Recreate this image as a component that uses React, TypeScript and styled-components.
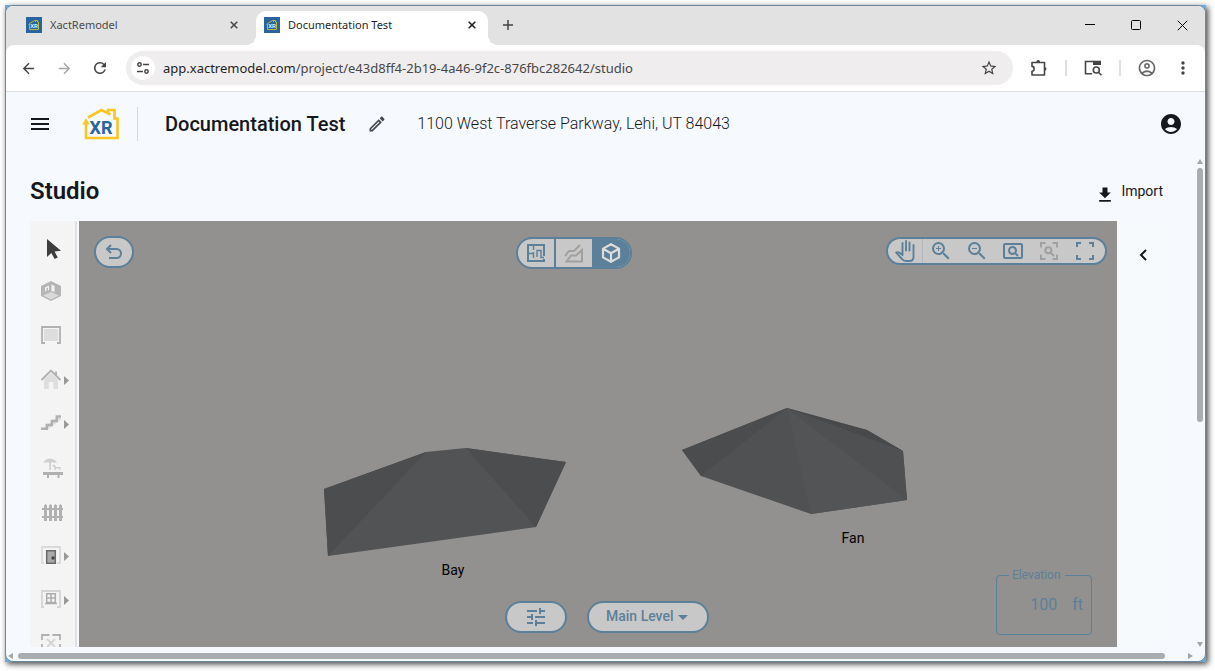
import React from "react";
import styled, { createGlobalStyle } from "styled-components";
import {
  MdAccountCircle,
  MdArrowBack,
  MdArrowForward,
  MdGetApp,
  MdMenu,
  MdMoreVert,
  MdOutlineAccountCircle,
  MdOutlineEdit,
  MdOutlinePageview,
  MdRefresh,
  MdStarBorder,
  MdTune,
  MdZoomIn,
  MdZoomOut,
} from "react-icons/md";

const blue = "#5c8099";
const pillFill = "#c8c8c8";
const uiFont = '"Noto Sans", "Open Sans", sans-serif';
const appFont = 'Roboto, "Liberation Sans", sans-serif';

const GlobalStyle = createGlobalStyle`
  *, *::before, *::after { box-sizing: border-box; }
  body { margin: 0; background: #fff; font-family: ${appFont}; color: #16181d; }
  button { border: 0; padding: 0; background: none; color: inherit; font: inherit; cursor: pointer; }
  svg { display: block; flex: none; }
  h1, h2, p { margin: 0; }
`;

const Page = styled.div`
  height: 100vh;
  min-height: 480px;
  padding: 5px 9px 9px 5px;
  overflow: hidden;
`;

const Frame = styled.div`
  height: 100%;
  background: #6ba9da;
  box-shadow: 2px 2px 6px rgba(0, 0, 0, 0.75);
`;

const BrowserWindow = styled.div`
  height: 100%;
  display: flex;
  flex-direction: column;
  border: 1px solid #6a89a1;
  border-radius: 8px;
  overflow: hidden;
  background: #f6fafe;
`;

const TabStrip = styled.div`
  flex: none;
  height: 39px;
  display: flex;
  background: #e2e2e2;
  font: 11px/16px ${uiFont};
`;

const Tabs = styled.div`
  display: flex;
  padding: 5px 0 0 12px;
`;

const Tab = styled.div<{ $active?: boolean }>`
  position: relative;
  width: ${(p) => (p.$active ? 232 : 238)}px;
  height: 34px;
  display: flex;
  align-items: center;
  gap: 8px;
  padding: 0 ${(p) => (p.$active ? 8 : 14)}px 6px 8px;
  border-radius: 10px 10px 0 0;
  background: ${(p) => (p.$active ? "#fff" : "transparent")};
  color: ${(p) => (p.$active ? "#1f1f1f" : "#4a4a4a")};

  &::before,
  &::after {
    content: ${(p) => (p.$active ? '""' : "none")};
    position: absolute;
    bottom: 0;
    width: 10px;
    height: 10px;
  }
  &::before {
    right: 100%;
    background: radial-gradient(circle at 0 0, transparent 10px, #fff 10px);
  }
  &::after {
    left: 100%;
    background: radial-gradient(circle at 100% 0, transparent 10px, #fff 10px);
  }
`;

const TabTitle = styled.span`
  flex: 1;
  white-space: nowrap;
`;

const StripButton = styled.button`
  width: 16px;
  height: 16px;
  display: grid;
  place-items: center;
`;

const NewTab = styled.button`
  width: 40px;
  height: 38px;
  display: grid;
  place-items: center;
  color: #444;
`;

const WindowControls = styled.div`
  margin-left: auto;
  display: flex;
`;

const WindowButton = styled.button`
  width: 46px;
  height: 38px;
  display: grid;
  place-items: center;
  color: #000;
`;

const ToolbarBack = styled.div`
  flex: none;
  background: #e2e2e2;
`;

const AddressBar = styled.div`
  height: 47px;
  display: flex;
  align-items: center;
  padding: 0 12px;
  border-bottom: 1px solid #dcdfe0;
  border-radius: 8px 8px 0 0;
  background: #fff;
  color: #454545;
`;

const NavButton = styled.button<{ $dim?: boolean }>`
  width: 20px;
  height: 20px;
  margin-right: 16px;
  display: grid;
  place-items: center;
  color: ${(p) => (p.$dim ? "#a6a6a6" : "#444")};
`;

const UrlPill = styled.div`
  flex: 1;
  height: 34px;
  display: flex;
  align-items: center;
  padding: 0 14px 0 5px;
  border-radius: 17px;
  background: #efedee;
`;

const SiteInfo = styled.button`
  width: 24px;
  height: 24px;
  display: grid;
  place-items: center;
  border-radius: 50%;
  background: #fff;
`;

const Url = styled.div`
  flex: 1;
  padding-left: 8px;
  overflow: hidden;
  white-space: nowrap;
  font: 13px/20px ${uiFont};
  color: #474747;

  strong {
    font-weight: 400;
    color: #1f1f1f;
  }
`;

const BrowserActions = styled.div`
  display: flex;
  align-items: center;
  gap: 16px;
  padding-left: 16px;
`;

const BrowserAction = styled.button`
  width: 20px;
  height: 20px;
  display: grid;
  place-items: center;
`;

const ActionRule = styled.span`
  width: 2px;
  height: 16px;
  background: #e0e0e0;
`;

const AppHeader = styled.header`
  flex: none;
  height: 63px;
  display: flex;
  align-items: center;
  padding: 1px 22px 0 22px;
`;

const HeaderButton = styled.button`
  display: grid;
  place-items: center;
`;

const LogoLink = styled.a`
  margin-left: 30px;
  padding-right: 17px;
  border-right: 1px solid #d5d9dd;
`;

const ProjectTitle = styled.h1`
  margin: 0 22px 0 27px;
  font: 500 20px/28px ${appFont};
  white-space: nowrap;
`;

const Address = styled.p`
  flex: 1;
  margin-left: 30px;
  font: 300 16px/24px ${appFont};
  white-space: nowrap;
`;

const Body = styled.div`
  flex: 1;
  min-height: 0;
  display: grid;
  grid-template-columns: minmax(0, 1fr) 10px;
  grid-template-rows: minmax(0, 1fr) 14px;
`;

const Main = styled.main`
  min-height: 0;
  display: flex;
  flex-direction: column;
  padding: 0 28px 0 24px;
`;

const StudioBar = styled.div`
  flex: none;
  height: 66px;
  display: flex;
  align-items: center;
  justify-content: space-between;
  padding: 6px 4px 0 0;
`;

const StudioTitle = styled.h2`
  font: 600 24px/32px ${appFont};
`;

const ImportButton = styled.button`
  display: flex;
  align-items: center;
  gap: 6px;
  font: 14px/20px ${appFont};

  svg {
    margin-top: 8px;
  }
`;

const Workspace = styled.div`
  flex: 1;
  min-height: 0;
  display: flex;
`;

const ToolRail = styled.nav`
  width: 47px;
  margin-right: 2px;
  padding-top: 4px;
  flex: none;
  overflow: hidden;
  border-right: 2px solid #e1e1e1;
  border-radius: 4px 0 0 4px;
  background: #f4f4f4;
`;

const ToolButton = styled.button`
  width: 100%;
  height: 44px;
  display: flex;
  align-items: center;
  gap: 1px;
  padding-left: 9px;
`;

const Canvas = styled.section`
  position: relative;
  flex: 1;
  min-width: 0;
  overflow: hidden;
  background: #92918f;
`;

const Scene = styled.svg`
  width: 100%;
  height: 100%;
`;

const SidePanel = styled.aside`
  width: 50px;
  flex: none;
  padding: 24px 0 0 16px;
  border-right: 1px solid #f8f9fa;
  border-radius: 0 8px 8px 0;
  background: #f7fafd;
`;

const PanelToggle = styled.button`
  width: 20px;
  height: 20px;
  display: grid;
  place-items: center;
`;

const Pill = styled.div`
  display: flex;
  align-items: stretch;
  border: 2px solid ${blue};
  border-radius: 16px;
  overflow: hidden;
  background: ${pillFill};
  color: ${blue};
`;

const UndoPill = styled(Pill)`
  position: absolute;
  top: 15px;
  left: 15px;
  width: 40px;
  height: 32px;
`;

const ViewPill = styled(Pill)`
  position: absolute;
  top: 16px;
  left: calc(50% - 24px);
  width: 116px;
  height: 32px;
  transform: translateX(-50%);
`;

const ZoomPill = styled(Pill)`
  position: absolute;
  top: 16px;
  right: 10px;
  height: 28px;
  padding-right: 2px;
`;

const LevelControls = styled.div`
  position: absolute;
  bottom: 14px;
  left: calc(50% + 9px);
  display: flex;
  gap: 20px;
  transform: translateX(-50%);
`;

const PillButton = styled.button<{ $width?: number; $selected?: boolean; $ruled?: boolean; $dim?: boolean }>`
  flex: ${(p) => (p.$width ? "none" : "1")};
  width: ${(p) => (p.$width ? `${p.$width}px` : "auto")};
  display: flex;
  align-items: center;
  justify-content: center;
  border-right: ${(p) => (p.$ruled ? "1px solid #b4b7b9" : "0")};
  background: ${(p) => (p.$selected ? blue : "transparent")};
  color: ${(p) => (p.$selected ? "#dcdcdc" : p.$dim ? "#a0a0a0" : blue)};
`;

const PillRule = styled.span`
  width: 2px;
  background: ${blue};
`;

const OptionsPill = styled(Pill)`
  width: 62px;
  height: 32px;
`;

const LevelPill = styled(Pill)`
  position: relative;
  width: 122px;
  height: 32px;

  svg {
    position: absolute;
    top: 12px;
    right: 19px;
    pointer-events: none;
  }
`;

const LevelSelect = styled.select`
  flex: 1;
  appearance: none;
  border: 0;
  padding: 0 0 2px 17px;
  background: none;
  color: inherit;
  font: 500 14px/20px ${appFont};
`;

const Elevation = styled.fieldset`
  position: absolute;
  right: 25px;
  bottom: 12px;
  width: 96px;
  min-width: 0;
  height: 67px;
  margin: 0;
  padding: 11px 8px 0 12px;
  border: 1px solid ${blue};
  border-radius: 4px;
  color: ${blue};
  font: 16px/24px ${appFont};

  legend {
    padding: 0 4px 0 3px;
    font-size: 12px;
    line-height: 14px;
  }
`;

const ElevationRow = styled.div`
  display: flex;
  gap: 15px;
`;

const ElevationInput = styled.input`
  flex: 1;
  min-width: 0;
  height: 24px;
  border: 0;
  padding: 0;
  background: none;
  color: inherit;
  font: inherit;
  text-align: right;
`;

const VerticalScroll = styled.div`
  display: flex;
  flex-direction: column;
  align-items: center;
  padding: 4px 0 0;
`;

const HorizontalScroll = styled.div`
  display: flex;
  align-items: center;
  padding: 3px 2px 0;
`;

const Track = styled.div<{ $vertical?: boolean }>`
  flex: 1;
  display: flex;
  flex-direction: ${(p) => (p.$vertical ? "column" : "row")};
  margin: ${(p) => (p.$vertical ? "4px 0" : "0 5px")};
`;

const Thumb = styled.div<{ $vertical?: boolean }>`
  width: ${(p) => (p.$vertical ? "6px" : "calc(100% - 18px)")};
  height: ${(p) => (p.$vertical ? "54%" : "6px")};
  border-radius: 3px;
  background: #a9adb0;
`;

const line = { fill: "none", stroke: "currentColor" };

function Favicon() {
  return (
    <svg width="16" height="16" viewBox="0 0 16 16">
      <path fill="#2a639d" d="M0 0h16v16H0z" />
      <path d="M3.5 7v5.5h9V5h-1V3.5H9.500V5M2.500 7.500l1-1 5-3 1.500.500" fill="none" stroke="#b7b545" />
      <text x="8" y="11" textAnchor="middle" fontSize="6" fontWeight="700" fontFamily={appFont} fill="#dcebf5">XR</text>
    </svg>
  );
}

function Logo() {
  return (
    <svg width="38" height="34" viewBox="0 0 38 34" aria-label="XR">
      <path d="M4 14v17H35.500V11.500H32.500V3H26V6" fill="none" stroke="#f9c622" strokeWidth="2.600" />
      <path d="M6 10.500L19.500 3L28.500 7.500" fill="none" stroke="#f9c622" strokeWidth="2.600" />
      <path d="M4 11L0.300 17.500H7.700z" fill="#f9c622" />
      <text x="19" y="27" textAnchor="middle" fontSize="18" fontWeight="700" fontFamily={appFont} fill="#2a639d">XR</text>
    </svg>
  );
}

function Cross({ size, weight }: { size: number; weight: number }) {
  return (
    <svg width={size} height={size} viewBox={`0 0 ${size} ${size}`} {...line} strokeWidth={weight}>
      <path d={`M.7 .7L${size - 0.7} ${size - 0.7}M${size - 0.7} .7L.7 ${size - 0.7}`} />
    </svg>
  );
}

const toolDrawings: { name: string; menu?: boolean; art: React.ReactNode }[] = [
  {
    name: "Select",
    art: <path d="M8 4V22L12.300 18L15.700 24L18.700 22.400L15.600 16.500L22 15.800z" fill="#3d3d3d" />,
  },
  {
    name: "Room",
    art: (
      <>
        <path d="M12 2L22 7V17L12 22L2 17V7z" fill="#b5b5b5" />
        <path d="M12 13L20 16.500L12 20.500L4 16.500z" fill="#dadada" />
        <path d="M12.500 5.500L15.500 7V13L12.500 12zM6 8.500L10 6.500V11L9 11.500V8.500L7.500 9.300V12L6 12.500z" fill="#f4f4f4" />
      </>
    ),
  },
  {
    name: "Ceiling",
    art: (
      <>
        <path d="M6 20H3V4H21V20H18" fill="none" stroke="#b1b1b1" strokeWidth="1.800" />
        <path d="M5 6H19V18H5z" fill="#dddddd" />
      </>
    ),
  },
  {
    name: "Roof",
    menu: true,
    art: (
      <>
        <path d="M5 12.500L12 6L19 12.500V22H14.500V15H9.800V22H5z" fill="#dedede" />
        <path d="M2.500 13L12 3.500L21.500 13M17 8V4.500" fill="none" stroke="#b1b1b1" strokeWidth="1.900" />
      </>
    ),
  },
  {
    name: "Stairs",
    menu: true,
    art: (
      <>
        <path d="M3 19L7 15L12 11L17 7H22V8.500L8 19z" fill="#dedede" />
        <path d="M2 17.800H7.800V14H12.800V10H17.800V5.500H22" fill="none" stroke="#b1b1b1" strokeWidth="2.400" />
      </>
    ),
  },
  {
    name: "Deck",
    art: (
      <>
        <path d="M4 7.500C6 4.500 9 4 11 3.500C14 4 17 5 18 7.500zM10.300 7H12V15H10.300zM13 10L15.500 9.500L17 12H21.500V15H20.200V13.500H17V15H15.500V13z" fill="#cfcfcf" />
        <path d="M4 17H24V20H20.500V23H18.500V20H10V23H8V20H4z" fill="#b1b1b1" />
      </>
    ),
  },
  {
    name: "Fence",
    art: (
      <path
        d="M5 22V6.500L6.500 5L8 6.500V22zM10 22V6.500L11.500 5L13 6.500V22zM15 22V6.500L16.500 5L18 6.500V22zM20 22V6.500L21.500 5L23 6.500V22zM3 9H24V11H3zM3 17H24V19H3z"
        fill="#b1b1b1"
      />
    ),
  },
  {
    name: "Door",
    menu: true,
    art: (
      <>
        <path d="M5 20H3V4H21V20H18" fill="none" stroke="#dadada" strokeWidth="1.800" />
        <path d="M7.700 7.700H16.300V20.300H7.700z" fill="#aaa" stroke="#696969" strokeWidth="1.500" />
        <circle cx="14" cy="15" r="1.700" fill="#444" />
      </>
    ),
  },
  {
    name: "Window",
    menu: true,
    art: (
      <>
        <path d="M5 20H3V4H21V20H18" fill="none" stroke="#d5d5d5" strokeWidth="1.800" />
        <path d="M7.700 6.700H16.300V15.500H7.700zM12 6.700V15.500M7.700 11H16.300M6 16.500H18" fill="none" stroke="#adadad" strokeWidth="1.500" />
      </>
    ),
  },
  {
    name: "Missing wall",
    art: (
      <>
        <path d="M10.500 4H3V9M13.500 4H21V9M3 13V22M21 13V22" fill="none" stroke="#b1b1b1" strokeWidth="1.800" />
        <path d="M8 8L16 16M16 8L8 16" stroke="#d5d5d5" strokeWidth="2" />
      </>
    ),
  },
];

function Chrome() {
  return (
    <>
      <TabStrip>
        <Tabs>
          <Tab>
            <Favicon />
            <TabTitle>XactRemodel</TabTitle>
            <StripButton aria-label="Close XactRemodel"><Cross size={8} weight={1.6} /></StripButton>
          </Tab>
          <Tab $active>
            <Favicon />
            <TabTitle>Documentation Test</TabTitle>
            <StripButton aria-label="Close Documentation Test"><Cross size={8} weight={1.6} /></StripButton>
          </Tab>
        </Tabs>
        <NewTab aria-label="New tab">
          <svg width="10" height="10" viewBox="0 0 10 10" {...line} strokeWidth="1.500"><path d="M5 0V10M0 5H10" /></svg>
        </NewTab>
        <WindowControls>
          <WindowButton aria-label="Minimize">
            <svg width="10" height="10" viewBox="0 0 10 10" {...line}><path d="M0 4.500H10" /></svg>
          </WindowButton>
          <WindowButton aria-label="Maximize">
            <svg width="10" height="10" viewBox="0 0 10 10" {...line}><rect x=".5" y=".5" width="9" height="9" rx="1" /></svg>
          </WindowButton>
          <WindowButton aria-label="Close"><Cross size={11} weight={1} /></WindowButton>
        </WindowControls>
      </TabStrip>
      <ToolbarBack>
        <AddressBar>
          <NavButton aria-label="Back"><MdArrowBack size={17} /></NavButton>
          <NavButton aria-label="Forward" $dim><MdArrowForward size={17} /></NavButton>
          <NavButton aria-label="Reload"><MdRefresh size={18} /></NavButton>
          <UrlPill>
            <SiteInfo aria-label="Site information">
              <svg width="12" height="12" viewBox="0 0 12 12" {...line} strokeWidth="1.500">
                <circle cx="2.500" cy="2.500" r="1.700" /><path d="M6 2.500H12M0 9.500H6" /><circle cx="9.500" cy="9.500" r="1.700" />
              </svg>
            </SiteInfo>
            <Url><strong>app.xactremodel.com</strong>/project/e43d8ff4-2b19-4a46-9f2c-876fbc282642/studio</Url>
            <BrowserAction aria-label="Bookmark"><MdStarBorder size={18} /></BrowserAction>
          </UrlPill>
          <BrowserActions>
            <BrowserAction aria-label="Extensions">
              <svg width="18" height="18" viewBox="0 0 18 18" {...line} strokeWidth="1.600">
                <path d="M2 3.500H14.500V16H2V12.300C4.800 12.300 4.800 7.400 2 7.400z" strokeLinejoin="round" />
                <path d="M6.300 3A1.900 1.900 0 0 1 10.100 3zM15 8A1.900 1.900 0 0 1 15 11.700z" fill="currentColor" stroke="none" />
              </svg>
            </BrowserAction>
            <ActionRule />
            <BrowserAction aria-label="Search tabs">
              <svg width="18" height="16" viewBox="0 0 18 16" {...line} strokeWidth="1.600">
                <path d="M8 13.700H1.500V1.500H10" />
                <path d="M9 .7H17V5H9z" fill="currentColor" stroke="none" />
                <circle cx="12.300" cy="10" r="3" /><path d="M14.400 12.200L17.500 15.300" />
              </svg>
            </BrowserAction>
            <ActionRule />
            <BrowserAction aria-label="Profile"><MdOutlineAccountCircle size={20} color="#666" /></BrowserAction>
            <BrowserAction aria-label="Menu"><MdMoreVert size={20} /></BrowserAction>
          </BrowserActions>
        </AddressBar>
      </ToolbarBack>
    </>
  );
}

function Roofs() {
  return (
    <Scene viewBox="0 0 1038 426" role="img" aria-label="Bay and fan roofs">
      <path d="M245 268L347 231L387 227L487 241L457 306L249 335z" fill="#525355" />
      <path d="M245 268L347 231L249 335z" fill="#4c4d4f" />
      <path d="M387 227L487 241L457 306z" fill="#4c4d4f" />
      <path d="M603 229L708 187L788 209L824 230L828 279L732 293L622 255z" fill="#505153" />
      <path d="M603 229L708 187L622 255z" fill="#4b4c4e" />
      <path d="M708 187L828 279L732 293z" fill="#535456" />
      <path d="M708 187L824 230L828 279z" fill="#4f5052" />
      <path d="M708 187L788 209L824 230z" fill="#48494b" />
      <g fontFamily={appFont} fontSize="14" fill="#000" textAnchor="middle">
        <text x="374" y="354">Bay</text>
        <text x="774" y="322">Fan</text>
      </g>
    </Scene>
  );
}

function CanvasControls() {
  return (
    <>
      <UndoPill>
        <PillButton aria-label="Undo">
          <svg width="18" height="16" viewBox="0 0 18 16" {...line} strokeWidth="2">
            <path d="M6 1L2 5L6 9M2 5H11.500A4.500 4.500 0 0 1 11.500 14H4" />
          </svg>
        </PillButton>
      </UndoPill>
      <ViewPill>
        <PillButton aria-label="Floor plan" $width={36}>
          <svg width="18" height="18" viewBox="0 0 18 18" {...line} strokeWidth="2">
            <path d="M17 12V1H1V17H17V15" />
            <path d="M6.500 1V6M1 9.500H6.500M6.500 8V14M10 13V6.500H14V13.500H17" strokeWidth="1.400" />
          </svg>
        </PillButton>
        <PillRule />
        <PillButton aria-label="Elevation view" $dim $width={36}>
          <svg width="20" height="19" viewBox="0 0 20 19" {...line} strokeWidth="2">
            <path d="M1 12L5 7H10L16 1M2.500 17.500L7 11.500H12L18 6V17.500z" />
          </svg>
        </PillButton>
        <PillButton aria-label="3D view" $selected>
          <svg width="20" height="20" viewBox="0 0 20 20" {...line} strokeWidth="2.200">
            <path d="M10 1.200L18 5.600V14.400L10 18.800L2 14.400V5.600zM2.500 6L10 10.200L17.500 6M10 10.200V18.500" strokeLinejoin="round" />
          </svg>
        </PillButton>
      </ViewPill>
      <ZoomPill>
        <PillButton aria-label="Pan" $ruled $width={35}>
          <svg width="20" height="22" viewBox="0 0 20 22" {...line} strokeWidth="1.900" strokeLinecap="round">
            <path d="M7.500 11V3M11 10.500V1M14.500 10.500V2.500M18.500 5V17Q18.500 21 14.500 21H11Q8.500 21 7 19L1.200 12.500Q3.500 11 7.500 15V10" strokeLinejoin="round" />
          </svg>
        </PillButton>
        <PillButton aria-label="Zoom in" $width={36}><MdZoomIn size={24} /></PillButton>
        <PillButton aria-label="Zoom out" $width={36}><MdZoomOut size={24} /></PillButton>
        <PillButton aria-label="Zoom window" $width={36}><MdOutlinePageview size={24} /></PillButton>
        <PillButton aria-label="Zoom to selection" $dim $width={36}>
          <svg width="18" height="18" viewBox="0 0 18 18" {...line} strokeWidth="2">
            <path d="M1 5.500V1H5.500M12.500 1H17V5.500M17 12.500V17H12.500M5.500 17H1V12.500" />
            <circle cx="8.300" cy="8.300" r="3" /><path d="M10.500 10.500L14 14" />
          </svg>
        </PillButton>
        <PillButton aria-label="Fit to screen" $width={36}>
          <svg width="18" height="18" viewBox="0 0 18 18" {...line} strokeWidth="2">
            <path d="M1 5V1H5M13 1H17V5M17 13V17H13M5 17H1V13" />
          </svg>
        </PillButton>
      </ZoomPill>
      <LevelControls>
        <OptionsPill>
          <PillButton aria-label="Display options"><MdTune size={24} /></PillButton>
        </OptionsPill>
        <LevelPill>
          <LevelSelect aria-label="Level" defaultValue="main">
            <option value="main">Main Level</option>
          </LevelSelect>
          <svg width="10" height="5" viewBox="0 0 10 5"><path d="M0 0H10L5 5z" fill="currentColor" /></svg>
        </LevelPill>
      </LevelControls>
      <Elevation>
        <legend><label htmlFor="elevation">Elevation</label></legend>
        <ElevationRow>
          <ElevationInput id="elevation" type="text" defaultValue="100" />
          <span>ft</span>
        </ElevationRow>
      </Elevation>
    </>
  );
}

function Arrow({ d, w, h }: { d: string; w: number; h: number }) {
  return <svg width={w} height={h} viewBox={`0 0 ${w} ${h}`}><path d={d} fill="#a3a7aa" /></svg>;
}

export default function App() {
  return (
    <Page>
      <GlobalStyle />
      <Frame>
        <BrowserWindow>
          <Chrome />
          <AppHeader>
            <HeaderButton aria-label="Open menu"><MdMenu size={24} /></HeaderButton>
            <LogoLink href="#home"><Logo /></LogoLink>
            <ProjectTitle>Documentation Test</ProjectTitle>
            <HeaderButton aria-label="Rename project"><MdOutlineEdit size={20} color="#44474e" /></HeaderButton>
            <Address>1100 West Traverse Parkway, Lehi, UT 84043</Address>
            <HeaderButton aria-label="Account"><MdAccountCircle size={24} /></HeaderButton>
          </AppHeader>
          <Body>
            <Main>
              <StudioBar>
                <StudioTitle>Studio</StudioTitle>
                <ImportButton><MdGetApp size={20} />Import</ImportButton>
              </StudioBar>
              <Workspace>
                <ToolRail aria-label="Drawing tools">
                  {toolDrawings.map((tool) => (
                    <ToolButton key={tool.name} aria-label={tool.name}>
                      <svg width="24" height="24" viewBox="0 0 24 24">{tool.art}</svg>
                      {tool.menu && (
                        <svg width="5" height="24" viewBox="0 0 5 24"><path d="M0 9V18L5 13.500z" fill="#999" /></svg>
                      )}
                    </ToolButton>
                  ))}
                </ToolRail>
                <Canvas>
                  <Roofs />
                  <CanvasControls />
                </Canvas>
                <SidePanel>
                  <PanelToggle aria-label="Expand panel">
                    <svg width="8" height="12" viewBox="0 0 8 12" {...line} strokeWidth="2"><path d="M7 1L2 6L7 11" /></svg>
                  </PanelToggle>
                </SidePanel>
              </Workspace>
            </Main>
            <VerticalScroll>
              <Arrow w={6} h={5} d="M3 0L6 5H0z" />
              <Track $vertical><Thumb $vertical /></Track>
              <Arrow w={6} h={5} d="M0 0H6L3 5z" />
            </VerticalScroll>
            <HorizontalScroll>
              <Arrow w={5} h={6} d="M5 0V6L0 3z" />
              <Track><Thumb /></Track>
              <Arrow w={5} h={6} d="M0 0L5 3L0 6z" />
            </HorizontalScroll>
          </Body>
        </BrowserWindow>
      </Frame>
    </Page>
  );
}
